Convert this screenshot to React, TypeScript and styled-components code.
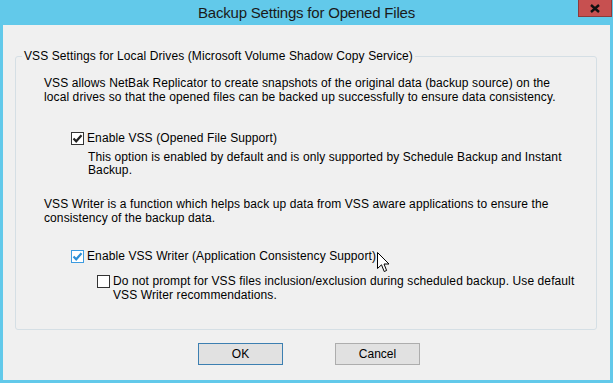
import React from "react";
import styled, { createGlobalStyle } from "styled-components";

const GlobalStyle = createGlobalStyle`
  html, body {
    margin: 0;
    padding: 0;
    background: #62c9ea;
  }
`;

type BoxKind = "dark" | "blue" | "empty";

const Check = ({ kind }: { kind: BoxKind }) => (
  <Box kind={kind}>
    {kind !== "empty" && (
      <svg width="11" height="11" viewBox="0 0 11 11">
        <path
          d="M1.5 5.5 L4.2 8.3 L9.5 2.2"
          fill="none"
          stroke={kind === "blue" ? "#2e8fd6" : "#222"}
          strokeWidth="2.2"
        />
      </svg>
    )}
  </Box>
);

const App = () => {
  return (
    <Frame>
      <GlobalStyle />
      <TitleBar>Backup Settings for Opened Files</TitleBar>
      <CloseButton>
        <svg width="10" height="9" viewBox="0 0 10 9">
          <path d="M1 1 L9 8 M9 1 L1 8" stroke="#111" strokeWidth="2.4" />
        </svg>
      </CloseButton>
      <Client>
        <Group>
          <Legend>VSS Settings for Local Drives (Microsoft Volume Shadow Copy Service)</Legend>
          <GroupBody>
            <Para top={13}>
              VSS allows NetBak Replicator to create snapshots of the original data (backup source) on the
              <br />
              local drives so that the opened files can be backed up successfully to ensure data consistency.
            </Para>
            <Option indent={27} top={27}>
              <Check kind="dark" />
              <Label>Enable VSS (Opened File Support)</Label>
            </Option>
            <Note>
              This option is enabled by default and is only supported by Schedule Backup and Instant
              Backup.
            </Note>
            <Para top={20}>
              VSS Writer is a function which helps back up data from VSS aware applications to ensure the
              consistency of the backup data.
            </Para>
            <Option indent={27} top={24}>
              <Check kind="blue" />
              <Label>Enable VSS Writer (Application Consistency Support)</Label>
            </Option>
            <Option indent={53} top={11}>
              <Check kind="empty" />
              <Label>
                Do not prompt for VSS files inclusion/exclusion during scheduled backup. Use default
                VSS Writer recommendations.
              </Label>
            </Option>
          </GroupBody>
        </Group>
        <Buttons>
          <Button primary>OK</Button>
          <Button>Cancel</Button>
        </Buttons>
      </Client>
      <Pointer width="13" height="21" viewBox="0 0 13 21">
        <path
          d="M0.5 0.5 L0.5 16.5 L4.5 12.8 L7.2 19.5 L9.6 18.5 L7 12 L12 12 Z"
          fill="#fff"
          stroke="#000"
          strokeWidth="1"
          strokeLinejoin="miter"
        />
      </Pointer>
    </Frame>
  );
};

export default App;

const Frame = styled.div`
  position: relative;
  width: 613px;
  height: 383px;
  box-sizing: border-box;
  padding: 0 3px 3px 3px;
  background: #62c9ea;
  display: flex;
  flex-direction: column;
  font-family: "Liberation Sans", Arial, sans-serif;
  color: #000;
`;
const TitleBar = styled.div`
  height: 25px;
  display: flex;
  align-items: center;
  justify-content: center;
  font-size: 15px;
  letter-spacing: -0.2px;
  color: #1a1a1a;
`;
const CloseButton = styled.div`
  position: absolute;
  top: 0;
  left: 578px;
  width: 34px;
  height: 17px;
  box-sizing: border-box;
  background: #c75050;
  border: 1px solid #8c3a3a;
  border-top: none;
  display: flex;
  align-items: center;
  justify-content: center;
`;
const Client = styled.div`
  flex: 1;
  background: #f0f0f0;
  display: flex;
  flex-direction: column;
  font-size: 12px;
  line-height: 14px;
  letter-spacing: 0.1px;
`;
const Group = styled.fieldset`
  margin: 24px 13px 0 12px;
  padding: 0 0 27px 0;
  border: 1px solid #d5dfe5;
  border-radius: 3px;
  min-width: 0;
`;
const Legend = styled.legend`
  margin-left: 6px;
  padding: 0 2px;
  line-height: 14px;
`;
const GroupBody = styled.div`
  padding: 0 14px 0 28px;
  white-space: normal;
`;
const Para = styled.p<{ top: number }>`
  margin: ${(p) => p.top}px 0 0 0;
`;
const Option = styled.div<{ indent: number; top: number }>`
  display: flex;
  align-items: flex-start;
  gap: 3px;
  margin: ${(p) => p.top}px 0 0 ${(p) => p.indent}px;
`;
const Box = styled.span<{ kind: BoxKind }>`
  flex: none;
  width: 13px;
  height: 13px;
  margin-top: 1px;
  box-sizing: border-box;
  background: #fff;
  border: 1px solid ${(p) => (p.kind === "blue" ? "#3c9be0" : "#333")};
  display: flex;
  align-items: center;
  justify-content: center;
`;
const Label = styled.span``;
const Note = styled.p`
  margin: 6px 0 0 44px;
  line-height: 13px;
`;
const Buttons = styled.div`
  display: flex;
  gap: 52px;
  margin-top: 13px;
  padding-left: 195px;
`;
const Button = styled.button<{ primary?: boolean }>`
  width: 85px;
  height: 22px;
  box-sizing: border-box;
  background: #e1e1e1;
  border: 1px solid ${(p) => (p.primary ? "#3c7fb1" : "#adadad")};
  border-radius: 0;
  font-family: inherit;
  font-size: 12px;
  letter-spacing: 0;
  color: #000;
  padding: 0;
`;
const Pointer = styled.svg`
  position: absolute;
  left: 377px;
  top: 252px;
`;
